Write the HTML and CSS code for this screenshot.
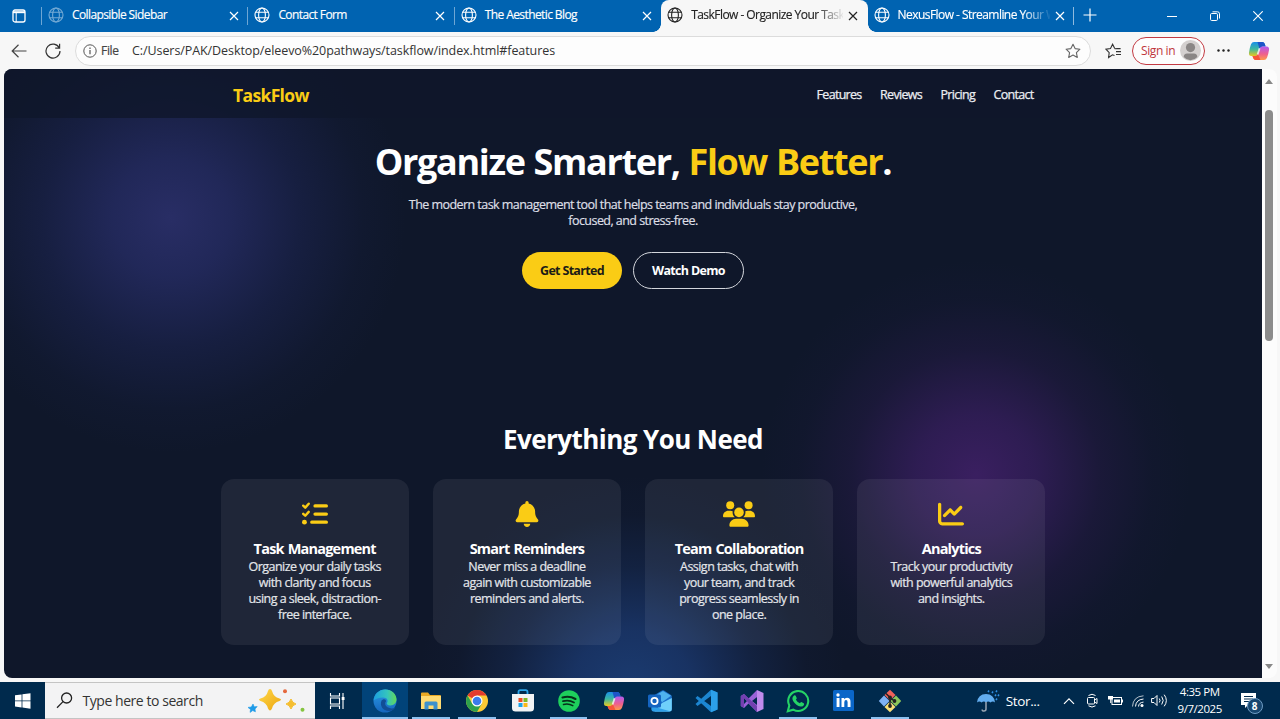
FILE: index.html
```html
<!DOCTYPE html>
<html lang="en">
<head>
<meta charset="utf-8">
<title>TaskFlow - Organize Your Tasks</title>
<link rel="stylesheet" href="styles.css">
</head>
<body>
<svg class="defs" width="0" height="0">
  <defs>
    <symbol id="globe" viewBox="0 0 16 16"><g fill="none" stroke="currentColor" stroke-width="1.1"><circle cx="8" cy="8" r="7"/><ellipse cx="8" cy="8" rx="3.4" ry="7"/><path d="M1.6 5.3h12.8M1.6 10.7h12.8"/></g></symbol>
    <symbol id="x" viewBox="0 0 10 10"><path d="M1 1l8 8M9 1l-8 8" fill="none" stroke="currentColor" stroke-width="1.2"/></symbol>
    <linearGradient id="cpA" x1="0" y1="0" x2="0" y2="1"><stop offset="0" stop-color="#1a8fe8"/><stop offset=".5" stop-color="#3cb8a0"/><stop offset="1" stop-color="#e8c820"/></linearGradient>
    <linearGradient id="cpB" x1="0" y1="0" x2="0" y2="1"><stop offset="0" stop-color="#b35cf0"/><stop offset=".55" stop-color="#ee5f8e"/><stop offset="1" stop-color="#ff9a4a"/></linearGradient>
    <symbol id="copilot" viewBox="0 0 22 20">
      <path d="M6 1h8.200q2 0 2.600 2l.8 2.500h-3q-1.700 0-2.300 1.700l-1.900 6q-.6 1.800-2.400 1.800H3.500Q.5 15 1 11.500 1.600 7 3 3.300 4 1 6 1z" fill="url(#cpA)"/>
      <path d="M9.500 1h4.700q2 0 2.600 2l.8 2.500h-3q-1.700 0-2.300 1.700L11.800 9z" fill="#1d55c8"/>
      <path d="M16 19H7.800q-2 0-2.600-2L4.500 15h3q1.800 0 2.400-1.800l1.900-6q.6-1.700 2.400-1.700h4.300q3 0 2.500 3.500-.6 4.200-2 7.700Q18 19 16 19z" fill="url(#cpB)"/>
      <path d="M12.500 19H7.800q-2 0-2.600-2L4.500 15h3q1.800 0 2.400-1.800z" fill="#f7553a"/>
      <path d="M9.600 13.500l2-6.300" fill="none" stroke="#fff" stroke-width="1.800" opacity=".75"/>
    </symbol>
    <linearGradient id="edgeA" x1="0" y1="0" x2="1" y2="0"><stop offset="0" stop-color="#1ba0e0"/><stop offset=".6" stop-color="#35c5bd"/><stop offset="1" stop-color="#63d957"/></linearGradient>
    <linearGradient id="edgeB" x1="0" y1="0" x2="0" y2="1"><stop offset="0" stop-color="#2b9be5"/><stop offset="1" stop-color="#1565bd"/></linearGradient>
  </defs>
</svg>

<div class="tabbar">
  <div class="workspace"><svg width="14" height="14" viewBox="0 0 14 14"><rect x="1" y="1" width="12" height="12" rx="2" fill="none" stroke="#fff" stroke-width="1.300"/><path d="M1 2.200h12v2H1z" fill="#fff"/><path d="M4.200 3v10" stroke="#fff"/></svg></div>
  <div class="tabs">
    <div class="tab"><svg class="fav dim"><use href="#globe"/></svg><span class="tab-title">Collapsible Sidebar</span><svg class="close"><use href="#x"/></svg></div>
    <div class="tab"><svg class="fav"><use href="#globe"/></svg><span class="tab-title">Contact Form</span><svg class="close"><use href="#x"/></svg></div>
    <div class="tab"><svg class="fav"><use href="#globe"/></svg><span class="tab-title">The Aesthetic Blog</span><svg class="close"><use href="#x"/></svg></div>
    <div class="tab active"><svg class="fav"><use href="#globe"/></svg><span class="tab-title fade">TaskFlow - Organize Your Task</span><svg class="close"><use href="#x"/></svg></div>
    <div class="tab last"><svg class="fav"><use href="#globe"/></svg><span class="tab-title fade">NexusFlow - Streamline Your W</span><svg class="close"><use href="#x"/></svg></div>
  </div>
  <svg class="plus" width="14" height="14" viewBox="0 0 14 14"><path d="M7 .5v13M.5 7h13" stroke="#fff" stroke-width="1.200"/></svg>
  <div class="winctl">
    <svg width="10" height="10" viewBox="0 0 10 10"><path d="M0 5.500h10" stroke="#fff"/></svg>
    <svg width="10" height="10" viewBox="0 0 10 10"><g fill="none" stroke="#fff"><rect x=".5" y="2.500" width="7" height="7" rx="1.200"/><path d="M2.500 .8h5q2 0 2 2v4.700"/></g></svg>
    <svg width="10" height="10" viewBox="0 0 10 10"><path d="M.3 .3l9.400 9.400M9.700 .3L.3 9.700" stroke="#fff" stroke-width="1.100"/></svg>
  </div>
</div>

<div class="toolbar">
  <svg class="back" width="16" height="14" viewBox="0 0 16 14"><path d="M15.500 7H1.200M7.500 .8L1.200 7l6.300 6.200" fill="none" stroke="#444" stroke-width="1.200"/></svg>
  <svg class="reload" width="16" height="16" viewBox="0 0 16 16"><path d="M14.300 5A7 7 0 1 0 15 8M14.600 .8v4.400h-4.400" fill="none" stroke="#333" stroke-width="1.200"/></svg>
  <div class="address">
    <svg width="14" height="14" viewBox="0 0 14 14"><circle cx="7" cy="7" r="6.200" fill="none" stroke="#555"/><path d="M7 6v4.300M7 3.600v1.300" stroke="#555" stroke-width="1.200"/></svg>
    <span class="file">File</span>
    <span class="url">C:/Users/PAK/Desktop/eleevo%20pathways/taskflow/index.html#features</span>
    <svg class="star" width="16" height="16" viewBox="0 0 16 16"><path d="M8 1.200l2.100 4.400 4.800.6-3.500 3.400.9 4.800L8 12.100l-4.300 2.300.9-4.800L1.100 6.200l4.800-.6z" fill="none" stroke="#666" stroke-width="1.100" stroke-linejoin="round"/></svg>
  </div>
  <svg class="favs" width="17" height="16" viewBox="0 0 17 16"><path d="M9.500 12.500L7.500 11.800 3.600 14.500l.6-4.900L1 6.200l4.500-.7L7.600 1.200l2 4.100 5.700.3M11 8.600h5M11 11.500h5M9.600 5.600h6" fill="none" stroke="#333" stroke-width="1.100"/></svg>
  <div class="signin"><span>Sign in</span><svg width="21" height="21" viewBox="0 0 21 21"><circle cx="10.500" cy="10.500" r="10.500" fill="#d4d0cf"/><circle cx="10.500" cy="7.600" r="4.600" fill="#8a8685"/><path d="M3.700 17q0-3.500 3.500-3.500h6.600q3.500 0 3.500 3.500-3 3.300-6.800 3.300T3.700 17z" fill="#8a8685"/></svg></div>
  <svg class="dots" width="13" height="3" viewBox="0 0 13 3"><circle cx="1.500" cy="1.500" r="1.200" fill="#222"/><circle cx="6.500" cy="1.500" r="1.200" fill="#222"/><circle cx="11.500" cy="1.500" r="1.200" fill="#222"/></svg>
  <svg class="cp" width="22" height="20"><use href="#copilot"/></svg>
</div>

<div class="viewport">
  <div class="page">
    <div class="nav">
      <div class="nav-in"><span class="logo">TaskFlow</span><div class="links"><a>Features</a><a>Reviews</a><a>Pricing</a><a>Contact</a></div></div>
    </div>
    <div class="hero">
      <h1>Organize Smarter, <span>Flow Better</span>.</h1>
      <p>The modern task management tool that helps teams and individuals stay productive,<br>focused, and stress-free.</p>
      <div class="btns"><a class="btn primary">Get Started</a><a class="btn outline">Watch Demo</a></div>
    </div>
    <h2>Everything You Need</h2>
    <div class="cards">
      <div class="card">
        <svg class="ico" width="26" height="26" viewBox="0 0 512 512"><g fill="none" stroke="#facc15" stroke-linecap="round" stroke-linejoin="round"><path d="M24 92l40 38 68-76M24 252l40 38 68-76" stroke-width="48"/><path d="M256 96h224M256 256h224M192 416h288" stroke-width="64"/></g><circle cx="48" cy="416" r="48" fill="#facc15"/></svg>
        <h3>Task Management</h3><p>Organize your daily tasks<br>with clarity and focus<br>using a sleek, distraction-<br>free interface.</p>
      </div>
      <div class="card">
        <svg class="ico" width="26" height="26" viewBox="-32 0 512 512"><path fill="#facc15" d="M224 0c-17.700 0-32 14.300-32 32l0 19.200C119 66 64 130.600 64 208l0 18.800c0 47-17.300 92.400-48.500 127.600l-7.400 8.300c-8.400 9.400-10.400 22.900-5.300 34.400S19.400 416 32 416l384 0c12.600 0 24-7.400 29.200-18.900s3.100-25-5.300-34.400l-7.400-8.300C401.300 319.200 384 273.900 384 226.800l0-18.800c0-77.400-55-142-128-156.800L256 32c0-17.700-14.300-32-32-32zm45.300 493.300c12-12 18.700-28.300 18.700-45.300l-64 0-64 0c0 17 6.700 33.300 18.700 45.300s28.300 18.700 45.300 18.700s33.300-6.700 45.300-18.700z"/></svg>
        <h3>Smart Reminders</h3><p>Never miss a deadline<br>again with customizable<br>reminders and alerts.</p>
      </div>
      <div class="card">
        <svg class="ico" width="32" height="26" viewBox="0 0 640 512"><g fill="#facc15"><circle cx="144" cy="80" r="80"/><circle cx="512" cy="80" r="80"/><circle cx="320" cy="224" r="96"/><path d="M0 298.700C0 239.800 47.800 192 106.700 192h42.700c15.900 0 31 3.500 44.600 9.700-1.300 7.200-1.900 14.700-1.900 22.300 0 38.200 16.800 72.500 43.300 96H21.300C9.600 320 0 310.400 0 298.700zM405.300 320c26.600-23.500 43.300-57.800 43.300-96 0-7.600-.7-15-1.900-22.300 13.600-6.300 28.700-9.700 44.600-9.700h42.700C592.200 192 640 239.800 640 298.700c0 11.800-9.600 21.300-21.300 21.300zM128 485.300C128 411.700 187.700 352 261.300 352h117.400C452.300 352 512 411.700 512 485.300c0 14.700-11.900 26.700-26.700 26.700H154.700c-14.700 0-26.700-11.900-26.700-26.700z"/></g></svg>
        <h3>Team Collaboration</h3><p>Assign tasks, chat with<br>your team, and track<br>progress seamlessly in<br>one place.</p>
      </div>
      <div class="card">
        <svg class="ico" width="26" height="26" viewBox="0 0 512 512"><path fill="#facc15" d="M64 64c0-17.700-14.300-32-32-32S0 46.300 0 64L0 400c0 44.200 35.800 80 80 80l400 0c17.700 0 32-14.300 32-32s-14.300-32-32-32L80 416c-8.800 0-16-7.200-16-16L64 64zm406.600 86.600c12.500-12.500 12.500-32.800 0-45.300s-32.800-12.500-45.300 0L320 210.700l-57.400-57.400c-12.500-12.500-32.800-12.500-45.300 0l-112 112c-12.500 12.500-12.500 32.800 0 45.300s32.800 12.500 45.300 0L240 221.300l57.400 57.400c12.500 12.500 32.800 12.500 45.300 0l128-128z"/></svg>
        <h3>Analytics</h3><p>Track your productivity<br>with powerful analytics<br>and insights.</p>
      </div>
    </div>
  </div>
  <div class="scroll"><i class="up"></i><i class="thumb"></i><i class="down"></i></div>
</div>

<div class="taskbar">
  <div class="start"><svg width="16" height="16" viewBox="0 0 16 16"><path fill="#fff" d="M0 2.300l6.600-.9v6.100H0zM7.400 1.300L15.500 .2v7.300H7.400zM0 8.300h6.600v6.100L0 13.500zM7.400 8.300h8.100v7.400l-8.100-1.100z"/></svg></div>
  <div class="search">
    <svg width="17" height="17" viewBox="0 0 17 17"><g fill="none" stroke="#222" stroke-width="1.300"><circle cx="10.600" cy="6" r="5"/><path d="M7 9.600L1 15.800"/></g></svg>
    <span>Type here to search</span>
    <svg class="sparkle" width="60" height="26" viewBox="0 0 60 26"><defs><linearGradient id="gold" x1="0" y1="0" x2="1" y2="1"><stop offset="0" stop-color="#ffd84a"/><stop offset="1" stop-color="#eca50f"/></linearGradient></defs><path d="M23 1q1.500 0 2 2 1.500 6 7.500 7.500 3 1 0 2.500-6 1.500-7.500 7.500-2 4-4 0-1.500-6-7.500-7.500-3-1.500 0-2.500 6-1.500 7.500-7.500.5-2 2-2z" fill="url(#gold)"/><path d="M44 11q1.200 4 5 5-3.800 1-5 5-1.200-4-5-5 3.800-1 5-5z" fill="#f5be30" stroke="#f5be30"/><path d="M6 16l1.200 2.800 3-.2-2.200 2.400.4 2.800-2.700-1.200-2.600 1.800.4-3L1 19.400l3.300-.4z" fill="#1e9be8" stroke="#1e9be8" stroke-width=".6"/><circle cx="38" cy="3.300" r="2" fill="#e5683c"/><circle cx="55.500" cy="21.800" r="2" fill="#85c440"/></svg>
  </div>
  <div class="tview"><svg width="16" height="16" viewBox="0 0 16 16"><g fill="none" stroke="#fff" stroke-width="1.100"><path d="M1.500 0v3h9V0M1.500 16v-3h9v3M1.500 5h9v6h-9zM14 0v16"/></g><path d="M12.700 4h2.800v3h-2.800z" fill="#fff"/></svg></div>
  <div class="apps">
    <div class="app sel"><svg width="24" height="24" viewBox="0 0 24 24"><circle cx="12" cy="12" r="11.500" fill="url(#edgeB)"/><path d="M.6 11.500C1.500 4.800 6.500.5 12.400.5c6.500 0 11.100 4.800 11.100 9.800 0 3.900-2.900 6.200-6.100 6.200-3 0-4.200-1.500-3.400-2.700 1.500-2.200.2-5.300-4-5.300-4.500 0-7.700 1.500-9.400 3z" fill="url(#edgeA)"/><path d="M8.500 11.500c-2 5 1.200 10.500 7.500 10.500 3 0 5.300-1.700 6.500-3.500-2.500 1.300-5.500 1.300-8-.2-2.400-1.500-3-4-1.500-6 0-2-2-3.200-4.500-.8z" fill="#124d96"/></svg></div>
    <div class="app run"><svg width="20" height="18" viewBox="0 0 20 18"><path d="M0 1.500Q0 .5 1 .5h6L9 3h10q1 0 1 1v13H0z" fill="#e9a924"/><path d="M0 4h20v13H0z" fill="#ffdb72"/><path d="M3.500 17.500V11q0-1.500 1.500-1.500h10q1.500 0 1.500 1.500v6.500h-4v-4h-5v4z" fill="#3d91cd"/></svg></div>
    <div class="app run"><svg width="24" height="24" viewBox="0 0 24 24"><circle cx="12" cy="12" r="11" fill="#fcc934"/><path d="M12 12L2.500 6.500A11 11 0 0 1 21.500 6.500H12z" fill="#e33b2e"/><path d="M2.500 6.500A11 11 0 0 0 12 23l4.800-8.300L7.300 14.700z" fill="#2da14c"/><circle cx="12" cy="12" r="5.500" fill="#fff"/><circle cx="12" cy="12" r="4.300" fill="#3a7cec"/></svg></div>
    <div class="app"><svg width="22" height="23" viewBox="0 0 22 23"><path d="M6.500 6V3q0-1.800 1.800-1.800h5.400q1.800 0 1.800 1.800v3" fill="none" stroke="#2ba4e8" stroke-width="1.800"/><path d="M0 5h22v14q0 3.500-3.500 3.500h-15Q0 22.500 0 19z" fill="#f2f3f4"/><path d="M6.500 9h4v4h-4z" fill="#f04d24"/><path d="M11.500 9h4v4h-4z" fill="#7db928"/><path d="M6.500 14h4v4h-4z" fill="#1ca3e8"/><path d="M11.500 14h4v4h-4z" fill="#fbb816"/></svg></div>
    <div class="app run"><svg width="22" height="22" viewBox="0 0 22 22"><circle cx="11" cy="11" r="10.800" fill="#1ed05c"/><g fill="none" stroke="#06301a" stroke-linecap="round"><path d="M4.500 7.500q7-2 13 1.500" stroke-width="2.100"/><path d="M5 11.200q6-1.600 11 1.300" stroke-width="1.800"/><path d="M5.500 14.500q5-1.300 9.300 1.200" stroke-width="1.500"/></g></svg></div>
    <div class="app"><svg width="22" height="20"><use href="#copilot"/></svg></div>
    <div class="app"><svg width="24" height="22" viewBox="0 0 24 22"><path d="M4 6.500L14 .5q1-.5 2 0L23 5q.8.500.8 1.500V19q0 2.500-2.500 2.500H6Q3.500 21.500 3.500 19z" fill="#1b6fca"/><path d="M9 4.500L15 1l8 4.800-9 6.500z" fill="#4fb2ee"/><path d="M23.800 8v11q0 2.500-2.500 2.500H6.500L14 13z" fill="#6fd0fa"/><path d="M3.500 16l18.500 5.300q-.5.200-1 .2H6Q3.500 21.500 3.500 19z" fill="#2f9fe8"/><rect x="0" y="4.500" width="13" height="13" rx="1.500" fill="#1464c0"/><circle cx="6.500" cy="11" r="3.100" fill="none" stroke="#fff" stroke-width="1.800"/></svg></div>
    <div class="app"><svg width="24" height="24" viewBox="0 0 24 24"><path d="M17 .8L23.500 3.500v17L17 23.200 1.500 9 3.500 7l13.500 10V7L3.500 17l-2-2z" fill="#1c86d1"/><path d="M17 .8L23.500 3.500v17L17 23.200z" fill="#2ca0ea"/></svg></div>
    <div class="app"><svg width="24" height="24" viewBox="0 0 24 24"><path d="M17 1v22L8.500 14.500 4 19l-3.200-2V7L4 5l4.500 4.500zM4 9v6l3-3zM17 8l-5 4 5 4z" fill="#9a62d8" fill-rule="evenodd"/><path d="M.8 7L4 5l13 12v6L4 9v10l-3.200-2z" fill="#7340b0"/><path d="M17 1l6.500 3v16L17 23z" fill="#c08aec"/></svg></div>
    <div class="app run"><svg width="24" height="24" viewBox="0 0 24 24"><path d="M1.800 22.200l1.500-5.700A10 10 0 1 1 7.300 20.700z" fill="none" stroke="#25d366" stroke-width="2.100"/><path d="M8 6.500q1-.8 1.700.2l1 2.300q.2.700-.8 1.800 1.400 2.500 4 3.500 1-1.300 1.500-1.300l2.300 1.200q.8.500.2 1.700-1 1.800-3.300 1.500-4.500-.7-7.500-5.500-1.800-3.200.9-5.400z" fill="#25d366"/></svg></div>
    <div class="app"><svg width="21" height="21" viewBox="0 0 21 21"><rect width="21" height="21" rx="1.500" fill="#0a66c8"/><g fill="#fff"><circle cx="5" cy="5" r="1.700"/><path d="M3.600 8h2.900v9H3.600zM8.500 8h2.700v1.300Q12 7.800 14 7.800q3.500 0 3.500 4V17h-2.900v-4.700q0-2.200-1.600-2.200t-1.700 2.200V17H8.500z"/></g></svg></div>
    <div class="app run"><svg width="24" height="24" viewBox="0 0 24 24"><path d="M12 .8L17.500 6 12 11.500 6.500 6z" fill="#f0625a"/><path d="M6 6.500l5.500 5.500L6 17.500.8 12z" fill="#7fb2f5"/><path d="M18 6.500l5.200 5.500-5.200 5.500-5.500-5.500z" fill="#8cc75a"/><path d="M12 12.500l5.500 5.500-5.500 5.200L6.500 18z" fill="#fadf76"/><path d="M8 4.500l4 4v9M12 9l4.500 3" stroke="#222" stroke-width="1.500" fill="none"/><circle cx="12" cy="8.500" r="1.900" fill="#222"/><circle cx="16.500" cy="12" r="1.900" fill="#222"/><circle cx="12" cy="17" r="1.900" fill="#222"/></svg></div>
  </div>
  <div class="tray">
    <svg class="umb" width="24" height="24" viewBox="0 0 24 24"><path d="M1 13.500Q2 5 10 5t9 8.500q-2.300-2-4.500 0-2.300-2-4.500 0-2.200-2-4.500 0-2.200-2-4.500 0z" fill="#62adf0"/><path d="M10 13v7q0 2-2 2t-1.800-1.500" fill="none" stroke="#9aa7b5" stroke-width="1.500"/><path d="M12 3l1-1.500M16 4l1-1.500M19 7l1-1.500M20 11l1-1.500M20 3l1-1.500M22 7l1-1.500" stroke="#2f8fe5" stroke-width="1.500"/></svg>
    <span class="stor">Stor...</span>
    <svg class="chev" width="12" height="8" viewBox="0 0 12 8"><path d="M1 6.800l5-5 5 5" fill="none" stroke="#fff" stroke-width="1.200"/></svg>
    <svg class="cam" width="11" height="15" viewBox="0 0 11 15"><g fill="none" stroke="#fff"><rect x=".5" y="4.500" width="7" height="6.500" rx="1"/><path d="M7.500 7l2.500-1.500v5L7.500 9M1.500 2.500Q5 0 8.500 2.500M1.500 12.800q3.500 2.500 7 0"/></g></svg>
    <svg class="bat" width="15" height="11" viewBox="0 0 15 11"><rect x="4" y="2.500" width="9.500" height="7" fill="none" stroke="#fff"/><path d="M6 4.500h6v3H6zM13.500 4.500H15v3h-1.500zM0 1h5v3.500H3.200V8h-1V4.500H0z" fill="#fff"/></svg>
    <svg class="wifi" width="12" height="12" viewBox="0 0 12 12"><g fill="none" stroke="#fff" stroke-width="1"><path d="M.5 11.500Q1 1.500 11.500 .8" opacity=".7"/><path d="M3.500 11.500q.5-7 8-7.500M6.500 11.500q.3-4 5-4.400" /></g><circle cx="10" cy="10.500" r="1.500" fill="#fff"/></svg>
    <svg class="vol" width="17" height="13" viewBox="0 0 17 13"><g fill="none" stroke="#fff" stroke-width="1"><path d="M.6 4.500H3L6 1.500v10L3 8.500H.6zM8.300 4.500q1.500 2 0 4M10.700 2.500q3 4 0 8M13.200 .7q4.300 5.800 0 11.600"/></g></svg>
    <div class="clock"><span>4:35 PM</span><span>9/7/2025</span></div>
    <div class="note"><svg width="16" height="16" viewBox="0 0 16 16"><path d="M0 0h15v12H7l-3 3v-3H0z" fill="#fff"/><path d="M3 3.500h9M3 6h9M3 8.500h6" stroke="#002a4d"/></svg><b>8</b></div>
  </div>
</div>
</body>
</html>
```
FILE: styles.css
```css
* { box-sizing: border-box; }
body { margin: 0; width: 1280px; height: 719px; overflow: hidden; display: flex; flex-direction: column; background: #f7f7f7; font-family: "Open Sans", "Noto Sans", sans-serif; white-space: nowrap; }
svg { flex: none; display: block; }
.defs { position: absolute; }

.tabbar { height: 32px; flex: none; display: flex; align-items: center; background: #0063b1; color: #fff; }
.workspace { width: 42px; padding-left: 12px; }
.tabs { display: grid; grid-template-columns: repeat(5, 206.4px); height: 32px; }
.tab { display: flex; align-items: center; padding-left: 6px; height: 32px; position: relative; }
.tab::before { content: ""; position: absolute; left: -1px; top: 7px; width: 1px; height: 18px; background: #6ea6d4; }
.tab.last::after { content: ""; position: absolute; right: 0; top: 7px; width: 1px; height: 18px; background: #8fbade; }
.fav { width: 16px; height: 16px; margin-top: -2px; }
.fav.dim { opacity: .45; }
.tab-title { font-size: 12px; line-height: 18px; width: 152px; margin: -2px 5px 0 8px; letter-spacing: -.6px; -webkit-text-stroke: .15px; }
.fade { letter-spacing: -.55px; -webkit-mask-image: linear-gradient(90deg, #000 125px, transparent 154px); mask-image: linear-gradient(90deg, #000 125px, transparent 154px); }
.close { width: 10px; height: 10px; }
.tab.active { background: #f7f7f7; color: #222; border-radius: 8px 8px 0 0; }
.tab.active::before { left: -8px; top: 24px; width: 8px; height: 8px; background: radial-gradient(circle at 0 0, transparent 7.500px, #f7f7f7 8px); }
.tab.last::before { left: 0; top: 24px; width: 8px; height: 8px; background: radial-gradient(circle at 100% 0, transparent 7.500px, #f7f7f7 8px); }
.plus { margin: -2px 0 0 9px; }
.winctl { margin-left: auto; display: flex; gap: 33px; padding-right: 17px; }

.toolbar { height: 37px; flex: none; display: flex; align-items: center; padding-left: 11px; }
.reload { margin-left: 18px; }
.address { margin-left: 14px; width: 1016px; height: 30px; border: 1px solid #dcdcdc; border-radius: 15px; background: #fdfdfd; display: flex; align-items: center; padding: 0 9px 0 7px; }
.file { font-size: 12px; color: #444; margin-left: 4px; width: 31px; letter-spacing: -.3px; -webkit-text-stroke: .2px; }
.url { font-size: 12.500px; color: #333; letter-spacing: -.08px; }
.star { margin-left: auto; }
.favs { margin-left: 14px; }
.signin { margin-left: 10px; width: 73px; height: 28px; border: 1px solid #c33a42; border-radius: 14px; display: flex; align-items: center; justify-content: space-between; padding: 0 3px 0 8px; color: #c0353c; font-size: 12px; letter-spacing: -.4px; background: #fdfdfd; }
.dots { margin-left: 12px; }
.cp { margin-left: 18px; }

.viewport { height: 609px; flex: none; display: flex; padding-left: 4px; }
.page { width: 1258px; height: 609px; border-radius: 8px 0 0 8px; overflow: hidden; color: #fff; display: flex; flex-direction: column; align-items: center;
  background:
    radial-gradient(circle 235px at 167px 149px, rgba(64,66,155,.52), rgba(57,62,150,.43) 25%, rgba(50,58,145,.22) 55%, rgba(45,55,135,.06) 82%, transparent),
    radial-gradient(circle 215px at 972px 406px, rgba(94,38,142,.54), rgba(88,36,138,.42) 28%, rgba(75,32,120,.19) 58%, rgba(60,30,110,.05) 82%, transparent),
    radial-gradient(circle 215px at 628px 622px, rgba(35,84,160,.6), rgba(34,78,155,.5) 28%, rgba(32,72,145,.22) 58%, rgba(30,60,120,.05) 82%, transparent),
    #0f172a; }
.nav { width: 1258px; height: 49px; background: rgba(15,23,42,.8); }
.nav-in { width: 801px; height: 49px; margin: 0 auto; display: flex; justify-content: space-between; align-items: center; }
.logo { color: #facc15; font-size: 17.500px; font-weight: 700; letter-spacing: -.65px; padding-top: 2px; margin-left: .5px; }
.links { display: flex; gap: 18.500px; font-size: 12.500px; color: #eceef2; letter-spacing: -.7px; -webkit-text-stroke: .25px; padding-top: 2px; }
.hero { display: flex; flex-direction: column; align-items: center; height: 301px; padding-top: 20px; }
h1 { margin: 0; font-size: 36px; line-height: 48px; font-weight: 700; letter-spacing: -1.350px; word-spacing: 1px; }
h1 span { color: #facc15; }
.hero p { margin: 11px 0 0; font-size: 12.500px; line-height: 16px; text-align: center; color: #dddfe5; letter-spacing: -.55px; -webkit-text-stroke: .2px; }
.btns { display: flex; gap: 11px; margin-top: 23px; }
.btn { height: 37px; border-radius: 19px; font-size: 12.500px; font-weight: 700; display: flex; align-items: center; justify-content: center; letter-spacing: -.68px; }
.primary { width: 100px; background: #facc15; color: #1b1b16; }
.outline { width: 111px; border: 1px solid #d3d6dc; }
h2 { margin: 0; font-size: 26px; line-height: 40px; font-weight: 700; letter-spacing: -.57px; }
.cards { display: grid; grid-template-columns: repeat(4, 188.200px); gap: 24px; margin-top: 20px; position: relative; }
.card { height: 166px; border-radius: 13px; background: rgba(255,255,255,.065); display: flex; flex-direction: column; align-items: center; padding-top: 22px; }
.card h3 { margin: 12px 0 0; font-size: 14.500px; line-height: 19px; font-weight: 700; letter-spacing: -.8px; word-spacing: 1px; }
.card p { margin: 1px 0 0; font-size: 12.500px; line-height: 16px; text-align: center; color: #e4e6ea; letter-spacing: -.53px; -webkit-text-stroke: .2px; }
.scroll { width: 15px; background: #fcfcfc; border-radius: 0 8px 8px 0; display: flex; flex-direction: column; align-items: center; padding: 10px 1px 9px 0; }
.up { border: 4px solid transparent; border-bottom: 5px solid #888; border-top: 0; }
.thumb { width: 8px; height: 231px; margin-top: 26px; border-radius: 4px; background: #8b8b8b; }
.down { margin-top: auto; border: 4px solid transparent; border-top: 5px solid #888; border-bottom: 0; }

.taskbar { height: 37px; margin-top: auto; flex: none; display: flex; background: #002a4d; color: #fff; }
.start { width: 45px; display: flex; align-items: center; padding-left: 15px; }
.search { width: 270px; background: #f3f3f4; border: 1px solid #c4c4c4; border-width: 1px 0; display: flex; align-items: center; padding-left: 11px; color: #333; font-size: 14px; }
.search span { margin-left: 9.500px; letter-spacing: -.45px; }
.sparkle { margin-left: auto; margin-right: 8px; }
.tview { width: 47px; display: flex; align-items: center; justify-content: center; padding-right: 3px; }
.apps { display: grid; grid-template-columns: repeat(12, 45.900px); }
.app { display: flex; align-items: center; justify-content: center; position: relative; }
.app.sel { background: #014379; }
.app.run::after, .app.sel::after { content: ""; position: absolute; bottom: 0; left: 4px; right: 4px; height: 2px; background: #8cc1f0; }
.app.sel::after { left: 0; right: 0; }
.tray { flex: 1; display: flex; align-items: center; padding-left: 63px; }
.stor { font-size: 13.500px; margin-left: 6px; width: 35px; letter-spacing: -.35px; }
.chev { margin-left: 22px; }
.cam { margin-left: 12px; }
.bat { margin-left: 10px; }
.wifi { margin-left: 9px; }
.vol { margin-left: 7px; }
.clock { margin-left: 7px; width: 50px; display: flex; flex-direction: column; align-items: center; font-size: 11.500px; line-height: 17px; letter-spacing: -.45px; padding-bottom: 2px; }
.note { margin-left: 16px; position: relative; }
.note b { position: absolute; left: 6px; top: 5px; width: 16px; height: 16px; border-radius: 8px; border: 1px solid #6f9cc4; background: #17466f; font-size: 10px; line-height: 14px; text-align: center; }
```
